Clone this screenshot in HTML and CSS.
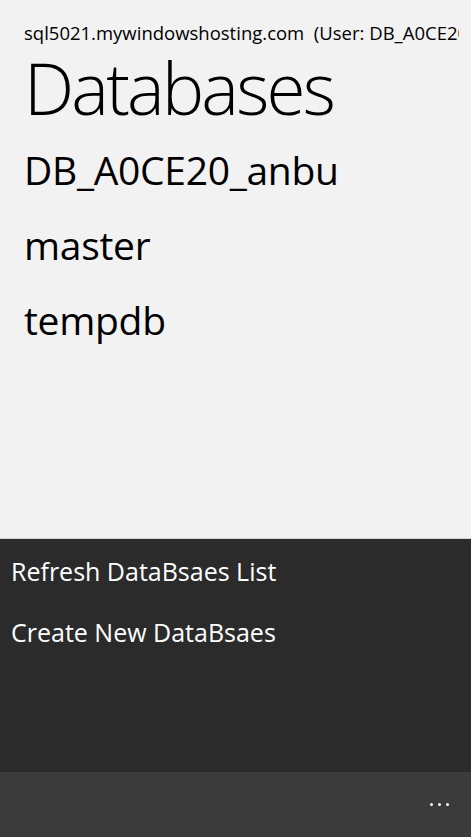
FILE: index.html
```html
<!DOCTYPE html>
<html>
<head>
<meta charset="utf-8">
<link rel="stylesheet" href="styles.css">
</head>
<body>
<div class="screen">
  <div class="main">
    <div class="server">sql5021.mywindowshosting.com&nbsp;&nbsp;(User: DB_A0CE20_anbu)</div>
    <h1 class="title">Databases</h1>
    <ul class="dblist">
      <li>DB_A0CE20_anbu</li>
      <li>master</li>
      <li>tempdb</li>
    </ul>
  </div>
  <div class="menu">
    <div class="menu-item">Refresh DataBsaes List</div>
    <div class="menu-item">Create New DataBsaes</div>
  </div>
  <div class="appbar">
    <div class="dots"><span></span><span></span><span></span></div>
  </div>
</div>
</body>
</html>
```

FILE: styles.css
```css
html, body {
  margin: 0;
  padding: 0;
}
body {
  font-family: "Open Sans", "Noto Sans", sans-serif;
  background: #f2f2f2;
}
.screen {
  width: 471px;
  height: 837px;
  display: flex;
  flex-direction: column;
  overflow: hidden;
}
.main {
  flex: 1;
  background: #f2f2f2;
  padding: 21px 0 0 24px;
  border-bottom: 1px solid #d6d6d6;
  overflow: hidden;
}
.server {
  font-size: 18.5px;
  line-height: 24px;
  color: #000;
  white-space: nowrap;
  overflow: hidden;
  width: 435px;
}
.title {
  margin: 3px 0 0 0;
  font-size: 71px;
  line-height: 80px;
  font-weight: 300;
  letter-spacing: -2.8px;
  color: #000;
}
.dblist {
  list-style: none;
  margin: 4px 0 0 0;
  padding: 0;
}
.dblist li {
  font-size: 39px;
  line-height: 75px;
  font-weight: 400;
  letter-spacing: -0.3px;
  color: #000;
}
.menu {
  height: 231px;
  background: #2b2b2b;
  padding: 2px 0 0 11px;
  flex-shrink: 0;
}
.menu-item {
  font-size: 25px;
  line-height: 61px;
  color: #ffffff;
}
.appbar {
  height: 65px;
  background: #3b3b3b;
  flex-shrink: 0;
  display: flex;
  justify-content: flex-end;
  align-items: center;
  padding-right: 22px;
}
.dots {
  display: flex;
  gap: 5px;
}
.dots span {
  width: 3px;
  height: 3px;
  background: #fff;
  border-radius: 50%;
}
```
